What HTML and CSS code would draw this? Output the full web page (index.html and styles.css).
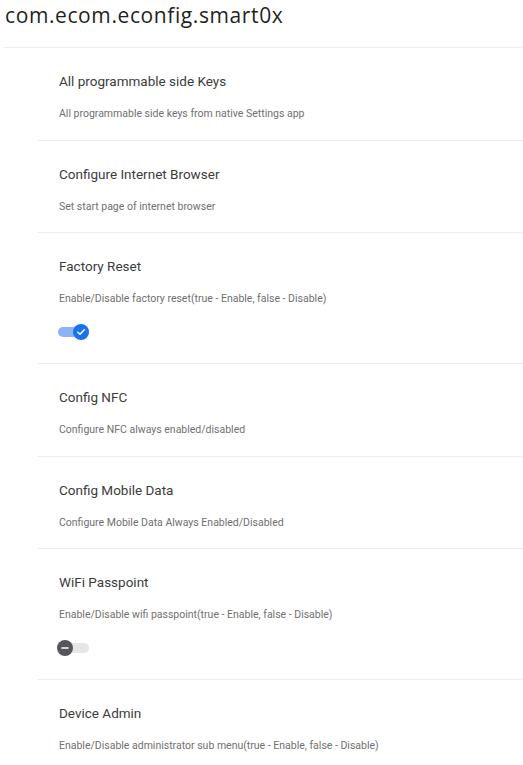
FILE: index.html
```html
<!DOCTYPE html>
<html lang="en">
<head>
    <meta charset="UTF-8">
    <meta name="viewport" content="width=device-width, initial-scale=1.0">
    <title>com.ecom.econfig.smart0x</title>
    <link rel="stylesheet" href="styles.css">
</head>
<body>
    <h1 class="page-title">com.ecom.econfig.smart0x</h1>
    <div class="settings">
        <div class="setting">
            <p class="setting-name">All programmable side Keys</p>
            <p class="setting-desc">All programmable side keys from native Settings app</p>
        </div>
        <div class="setting">
            <p class="setting-name">Configure Internet Browser</p>
            <p class="setting-desc">Set start page of internet browser</p>
        </div>
        <div class="setting">
            <p class="setting-name">Factory Reset</p>
            <p class="setting-desc">Enable/Disable factory reset(true - Enable, false - Disable)</p>
            <div class="toggle on">
                <span class="thumb">
                    <svg width="10" height="10" viewBox="0 0 10 10"><path d="M1.8 5.2 L4 7.3 L8.3 2.8" fill="none" stroke="#fff" stroke-width="1.5" stroke-linecap="round" stroke-linejoin="round"/></svg>
                </span>
            </div>
        </div>
        <div class="setting">
            <p class="setting-name">Config NFC</p>
            <p class="setting-desc">Configure NFC always enabled/disabled</p>
        </div>
        <div class="setting">
            <p class="setting-name">Config Mobile Data</p>
            <p class="setting-desc">Configure Mobile Data Always Enabled/Disabled</p>
        </div>
        <div class="setting">
            <p class="setting-name">WiFi Passpoint</p>
            <p class="setting-desc">Enable/Disable wifi passpoint(true - Enable, false - Disable)</p>
            <div class="toggle">
                <span class="thumb">
                    <svg width="10" height="10" viewBox="0 0 10 10"><path d="M2 5 H8" fill="none" stroke="#fff" stroke-width="1.6" stroke-linecap="round"/></svg>
                </span>
            </div>
        </div>
        <div class="setting">
            <p class="setting-name">Device Admin</p>
            <p class="setting-desc">Enable/Disable administrator sub menu(true - Enable, false - Disable)</p>
        </div>
    </div>
</body>
</html>
```

FILE: styles.css
```css
body {
    margin: 0;
    background-color: #ffffff;
    font-family: Roboto, "Liberation Sans", sans-serif;
    overflow: hidden;
}
.page-title {
    margin: 0 0 0 4px;
    padding: 1px 0 0 1px;
    height: 48px;
    box-sizing: border-box;
    font-family: "Open Sans", "DejaVu Sans", sans-serif;
    font-weight: 400;
    font-size: 21px;
    letter-spacing: 0.6px;
    line-height: 28px;
    color: #1f1f1f;
    border-bottom: 1px solid #ececec;
}
.settings {
    margin-left: 38px;
}
.setting {
    padding: 25px 0 19.5px 21px;
    border-bottom: 1px solid #ececec;
}
.setting-name {
    margin: 0 0 19px;
    font-size: 13.5px;
    line-height: 16px;
    color: #3c3c3c;
}
.setting-desc {
    margin: 0;
    font-size: 10.5px;
    line-height: 12px;
    color: #707070;
}
.toggle {
    position: relative;
    width: 32px;
    height: 16px;
    margin: 19px 0 3.5px -2px;
}
.toggle::before {
    content: "";
    position: absolute;
    left: 1px;
    right: 0;
    top: 3px;
    height: 10px;
    border-radius: 5px;
    background-color: #e6e6e6;
}
.toggle.on::before {
    background-color: #8ab4f8;
}
.thumb {
    position: absolute;
    top: 0;
    left: 0;
    width: 16px;
    height: 16px;
    border-radius: 50%;
    background-color: #54565a;
    display: flex;
    align-items: center;
    justify-content: center;
}
.toggle.on .thumb {
    left: auto;
    right: 0;
    background-color: #1a73e8;
}
```
